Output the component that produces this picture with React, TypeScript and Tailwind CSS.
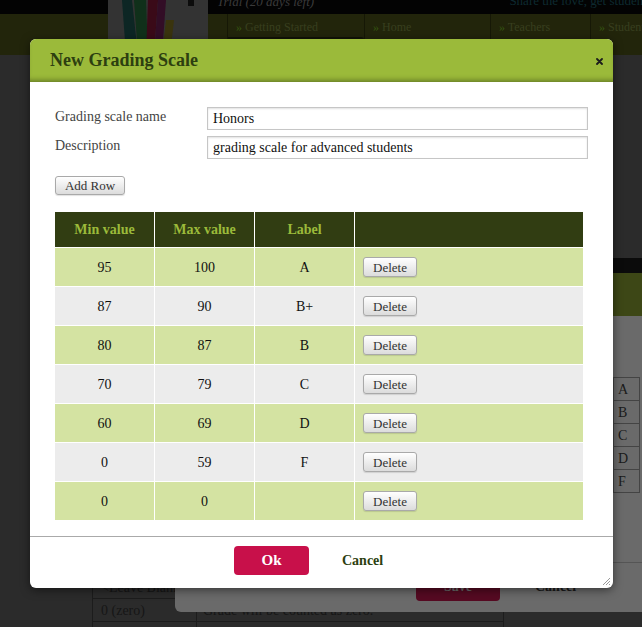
import React from "react";

const rows = [
  { min: "95", max: "100", label: "A" },
  { min: "87", max: "90", label: "B+" },
  { min: "80", max: "87", label: "B" },
  { min: "70", max: "79", label: "C" },
  { min: "60", max: "69", label: "D" },
  { min: "0", max: "59", label: "F" },
  { min: "0", max: "0", label: "" },
];

const navTabs = [
  { name: "Getting Started", w: "w-[137px]" },
  { name: "Home", w: "w-[126px]" },
  { name: "Teachers", w: "w-[100px]" },
  { name: "Students", w: "w-[80px]" },
];

function GreyButton({ children, className }: { children: React.ReactNode; className: string }) {
  return (
    <button
      className={
        "flex items-center justify-center rounded-[3px] border border-[#a9a9a9] bg-gradient-to-b from-white to-[#dcdcdc] text-[13px] leading-none text-[#333] shadow-[0_1px_1px_rgba(0,0,0,0.12)] " +
        className
      }
    >
      {children}
    </button>
  );
}

function Logo() {
  return (
    <svg width="100" height="55" viewBox="0 0 100 55">
      <rect width="100" height="55" fill="#333333" />
      <path d="M14 0 L24 0 L30 55 L18 55 Z" fill="#0d2624" />
      <path d="M26 0 L38 0 L40 55 L30 55 Z" fill="#10301a" />
      <path d="M40 0 L50 0 L46 55 L38 55 Z" fill="#3a0a18" />
      <path d="M50 0 L58 0 L54 55 L46 55 Z" fill="#320d26" />
      <path d="M58 20 L66 20 L62 55 L54 55 Z" fill="#3a340e" />
      <rect x="80" y="0" width="6" height="6" fill="#0c0c0c" />
    </svg>
  );
}

export default function App() {
  return (
    <div className="relative h-[627px] w-[642px] overflow-hidden bg-[#2b2b2b] font-['Liberation_Serif',Georgia,serif]">
      {/* ===== dimmed page behind ===== */}
      <div className="relative h-[55px] bg-[#22250b]">
        <div className="flex h-[14px] items-start bg-[#030303]">
          <div className="ml-[108px] w-[100px]" />
          <span className="-mt-[5px] ml-[9px] text-[13px] italic leading-[14px] text-[#3a3a3a]">
            Trial (20 days left)
          </span>
          <span className="-mt-[6px] ml-auto mr-[-10px] text-[13px] leading-[14px] text-[#0d2a30]">
            Share the love, get students
          </span>
        </div>
        <div className="flex h-[41px] pl-[227px]">
          {navTabs.map((t, i) => (
            <div
              key={t.name}
              className={
                "relative h-full shrink-0 border-l border-[#161806] pl-[8px] pt-[4px] text-[12px] text-[#383f1f] " + t.w
              }
            >
              <span className="text-[#355410]">»</span> {t.name}
              {i === 0 && <div className="absolute bottom-[12px] left-0 right-0 h-[6px] rounded-r-[4px] bg-[#121406]" />}
            </div>
          ))}
        </div>
        <div className="absolute left-[108px] top-0">
          <Logo />
        </div>
      </div>

      <div className="pl-[92px] pt-[521px]">
        <div className="w-[412px] border-l border-[#1c1c1c] text-[14px] text-[#161616]">
          <div className="flex h-[23px] border-b border-[#1c1c1c]">
            <div className="w-[104px] border-r border-[#1c1c1c] pl-[8px] leading-[23px]">&lt;Leave Blank&gt;</div>
            <div className="flex-1 border-r border-[#1c1c1c]" />
          </div>
          <div className="flex h-[23px] border-b border-[#1c1c1c]">
            <div className="w-[104px] border-r border-[#1c1c1c] pl-[8px] leading-[23px]">0 (zero)</div>
            <div className="flex-1 border-r border-[#1c1c1c] pl-[6px] leading-[23px]">Grade will be counted as zero.</div>
          </div>
          <div className="flex h-[23px]">
            <div className="w-[104px] border-r border-[#1c1c1c]" />
            <div className="flex-1 border-r border-[#1c1c1c]" />
          </div>
        </div>
      </div>

      {/* ===== second dialog behind ===== */}
      <div className="absolute left-[175px] top-[258px] flex h-[354px] w-[490px] flex-col overflow-hidden rounded-b-[6px] bg-[#6a6a6a]">
        <div className="h-[15px] bg-[#0b0b0b]" />
        <div className="h-[43px] bg-[#3d4716]" />
        <div className="flex-1 pt-[61px]">
          <div className="ml-[438px] w-[27px] border-l border-t border-[#444] text-[14px] text-[#1a1a1a]">
            {["A", "B", "C", "D", "F"].map((l) => (
              <div key={l} className="h-[23px] border-b border-r border-[#444] pl-[4px] leading-[23px]">
                {l}
              </div>
            ))}
          </div>
          <div className="mt-[69px] border-t border-[#555]" />
          <div className="flex items-center pl-[241px] pt-[8px]">
            <div className="flex h-[30px] w-[84px] items-center justify-center rounded-[4px] bg-[#560a22] text-[14px] font-bold text-[#6a6a6a]">
              Save
            </div>
            <span className="ml-[35px] text-[14px] font-bold text-[#1a1a1a]">Cancel</span>
          </div>
        </div>
      </div>

      {/* ===== main dialog ===== */}
      <div className="absolute left-[30px] top-[39px] flex h-[549px] w-[583px] flex-col overflow-hidden rounded-[6px] bg-white shadow-[0_2px_10px_rgba(0,0,0,0.5)]">
        <div className="flex h-[43px] shrink-0 items-center justify-between bg-[#9bba3a] pl-[20px] pr-[10px] shadow-[inset_0_-5px_5px_-3px_rgba(40,50,10,0.45)]">
          <h1 className="text-[18px] font-bold text-[#2d3f10]">New Grading Scale</h1>
          <svg width="7" height="7" viewBox="0 0 7 7" className="mt-[2px]">
            <path d="M1 1 L6 6 M6 1 L1 6" stroke="#1c1c1c" strokeWidth="1.8" strokeLinecap="round" />
          </svg>
        </div>

        <div className="flex flex-1 flex-col pl-[25px] pt-[25px]">
          <div className="flex h-[23px] items-center">
            <label className="mt-[-4px] w-[152px] shrink-0 text-[14px] text-[#444]">Grading scale name</label>
            <input
              readOnly
              value="Honors"
              className="h-[23px] w-[381px] shrink-0 border border-[#c6c6c6] pl-[5px] text-[14px] text-[#111] shadow-[inset_0_1px_2px_rgba(0,0,0,0.12)] outline-none"
            />
          </div>
          <div className="mt-[6px] flex h-[23px] items-center">
            <label className="mt-[-4px] w-[152px] shrink-0 text-[14px] text-[#444]">Description</label>
            <input
              readOnly
              value="grading scale for advanced students"
              className="h-[23px] w-[381px] shrink-0 border border-[#c6c6c6] pl-[5px] text-[14px] text-[#111] shadow-[inset_0_1px_2px_rgba(0,0,0,0.12)] outline-none"
            />
          </div>

          <GreyButton className="mt-[17px] h-[19px] w-[70px]">Add Row</GreyButton>

          <div className="mt-[17px] w-[528px] text-[14px]">
            <div className="flex h-[35px] bg-[#313d12] font-bold text-[#9bba3a]">
              <div className="flex w-[100px] items-center justify-center border-r border-white">Min value</div>
              <div className="flex w-[100px] items-center justify-center border-r border-white">Max value</div>
              <div className="flex w-[100px] items-center justify-center border-r border-white">Label</div>
              <div className="flex-1" />
            </div>
            {rows.map((r, i) => (
              <div
                key={i}
                className={
                  "flex h-[39px] border-t border-white text-[#111] " + (i % 2 === 0 ? "bg-[#d4e3a2]" : "bg-[#ececec]")
                }
              >
                <div className="flex w-[100px] items-center justify-center border-r border-white">{r.min}</div>
                <div className="flex w-[100px] items-center justify-center border-r border-white">{r.max}</div>
                <div className="flex w-[100px] items-center justify-center border-r border-white">{r.label}</div>
                <div className="flex flex-1 items-center pl-[8px]">
                  <GreyButton className="h-[20px] w-[54px]">Delete</GreyButton>
                </div>
              </div>
            ))}
          </div>
        </div>

        <div className="flex h-[52px] shrink-0 border-t border-[#aaaaaa] pl-[204px] pt-[9px]">
          <button className="h-[29px] w-[75px] rounded-[4px] bg-[#c8104a] text-[15px] font-bold text-white">Ok</button>
          <button className="ml-[33px] h-[29px] text-[14px] font-bold text-[#2d3f10]">Cancel</button>
        </div>

        <svg className="absolute bottom-[2px] right-[2px]" width="9" height="9" viewBox="0 0 9 9">
          <path d="M1 8 L8 1 M4 8 L8 4 M7 8 L8 7" stroke="#9a9a9a" strokeWidth="1" />
        </svg>
      </div>
    </div>
  );
}
